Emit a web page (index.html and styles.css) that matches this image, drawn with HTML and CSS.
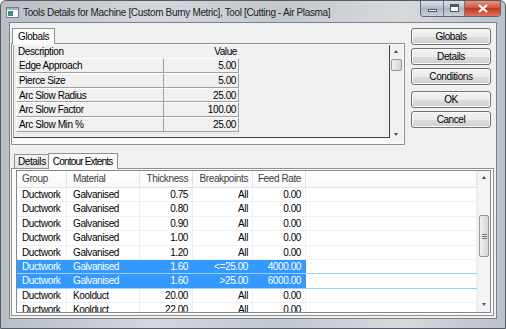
FILE: index.html
```html
<!DOCTYPE html>
<html lang="en">
<head>
  <meta charset="UTF-8">
  <title>Tools Details</title>
  <link rel="stylesheet" href="styles.css">
</head>
<body>
  <div class="window">
    <!-- caption bar -->
    <div class="titlebar">
      <svg class="app-icon" width="13" height="11" viewBox="0 0 13 11">
        <rect x="0.5" y="0.5" width="12" height="10" fill="#fff" stroke="#6d7f93"/>
        <rect x="1" y="1" width="11" height="2" fill="#9fb4cc"/>
        <rect x="2" y="4" width="3" height="5" fill="#3f9a5c"/>
        <rect x="5" y="4" width="2" height="5" fill="#3d7fc4"/>
      </svg>
      <span class="title">Tools Details for Machine [Custom Burny Metric], Tool [Cutting - Air Plasma]</span>
      <div class="caption-buttons">
        <div class="cap-btn cap-min"><span class="min-bar"></span></div>
        <div class="cap-btn cap-max"><span class="max-box"></span></div>
        <div class="cap-btn cap-close">
          <svg width="10" height="9" viewBox="0 0 10 9"><path d="M1 1 L9 8 M9 1 L1 8" stroke="#fff" stroke-width="2.2"/></svg>
        </div>
      </div>
    </div>

    <div class="client">
      <div class="top">
        <div class="tabs globals-tabs">
          <div class="tab-strip">
            <div class="tab active">Globals</div>
          </div>
          <div class="tab-panel globals-panel">
            <div class="grid">
              <div class="grid-rows">
                <div class="grid-head"><span class="g-desc">Description</span><span class="g-val">Value</span></div>
                <div class="grid-row"><span class="g-desc">Edge Approach</span><span class="g-val">5.00</span></div>
                <div class="grid-row"><span class="g-desc">Pierce Size</span><span class="g-val">5.00</span></div>
                <div class="grid-row"><span class="g-desc">Arc Slow Radius</span><span class="g-val">25.00</span></div>
                <div class="grid-row"><span class="g-desc">Arc Slow Factor</span><span class="g-val">100.00</span></div>
                <div class="grid-row"><span class="g-desc">Arc Slow Min %</span><span class="g-val">25.00</span></div>
              </div>
              <div class="vscroll small-scroll">
                <div class="arrow up"></div>
                <div class="thumb"></div>
                <div class="track"></div>
                <div class="arrow down"></div>
              </div>
            </div>
          </div>
        </div>

        <div class="buttons">
          <button class="btn">Globals</button>
          <button class="btn">Details</button>
          <button class="btn">Conditions</button>
          <button class="btn gap-before">OK</button>
          <button class="btn">Cancel</button>
        </div>
      </div>

      <div class="tabs bottom-tabs">
        <div class="tab-strip">
          <div class="tab">Details</div>
          <div class="tab active">Contour Extents</div>
        </div>
        <div class="tab-panel list-panel">
          <div class="listview">
            <div class="list-main">
              <div class="list-head">
                <span class="c-group">Group</span>
                <span class="c-mat">Material</span>
                <span class="c-thk num">Thickness</span>
                <span class="c-brk num">Breakpoints</span>
                <span class="c-feed num">Feed Rate</span>
                <span class="c-fill"></span>
              </div>
              <div class="list-row"><span class="c-group">Ductwork</span><span class="c-mat">Galvanised</span><span class="c-thk num">0.75</span><span class="c-brk num">All</span><span class="c-feed num">0.00</span><span class="c-fill"></span></div>
              <div class="list-row"><span class="c-group">Ductwork</span><span class="c-mat">Galvanised</span><span class="c-thk num">0.80</span><span class="c-brk num">All</span><span class="c-feed num">0.00</span><span class="c-fill"></span></div>
              <div class="list-row"><span class="c-group">Ductwork</span><span class="c-mat">Galvanised</span><span class="c-thk num">0.90</span><span class="c-brk num">All</span><span class="c-feed num">0.00</span><span class="c-fill"></span></div>
              <div class="list-row"><span class="c-group">Ductwork</span><span class="c-mat">Galvanised</span><span class="c-thk num">1.00</span><span class="c-brk num">All</span><span class="c-feed num">0.00</span><span class="c-fill"></span></div>
              <div class="list-row"><span class="c-group">Ductwork</span><span class="c-mat">Galvanised</span><span class="c-thk num">1.20</span><span class="c-brk num">All</span><span class="c-feed num">0.00</span><span class="c-fill"></span></div>
              <div class="list-row selected"><span class="c-group">Ductwork</span><span class="c-mat">Galvanised</span><span class="c-thk num">1.60</span><span class="c-brk num">&lt;=25.00</span><span class="c-feed num">4000.00</span><span class="c-fill"></span></div>
              <div class="list-row selected"><span class="c-group">Ductwork</span><span class="c-mat">Galvanised</span><span class="c-thk num">1.60</span><span class="c-brk num">&gt;25.00</span><span class="c-feed num">6000.00</span><span class="c-fill"></span></div>
              <div class="list-row"><span class="c-group">Ductwork</span><span class="c-mat">Koolduct</span><span class="c-thk num">20.00</span><span class="c-brk num">All</span><span class="c-feed num">0.00</span><span class="c-fill"></span></div>
              <div class="list-row"><span class="c-group">Ductwork</span><span class="c-mat">Koolduct</span><span class="c-thk num">22.00</span><span class="c-brk num">All</span><span class="c-feed num">0.00</span><span class="c-fill"></span></div>
            </div>
            <div class="vscroll list-scroll">
              <div class="arrow up"></div>
              <div class="track top-track"></div>
              <div class="thumb"><span class="grip"></span></div>
              <div class="track"></div>
              <div class="arrow down"></div>
            </div>
          </div>
        </div>
      </div>
    </div>
  </div>
</body>
</html>
```

FILE: styles.css
```css
* {
  box-sizing: border-box;
  margin: 0;
  padding: 0;
}

body {
  font-family: 'Liberation Sans', Arial, sans-serif;
  font-size: 10px;
  letter-spacing: -0.4px;
  color: #000;
  background: #fff;
}

/* window frame */
.window {
  width: 506px;
  height: 329px;
  padding: 0 8px 9px 8px;
  background: linear-gradient(90deg, #b9bec4 0%, #d4d8dc 30%, #c3c8cd 55%, #d7dadd 80%, #bcc1c6 100%);
  border: 1px solid #555b62;
  border-radius: 6px 6px 0 0;
  display: flex;
  flex-direction: column;
  overflow: hidden;
}

.titlebar {
  flex-shrink: 0;
  height: 21px;
  display: flex;
  align-items: flex-start;
  position: relative;
}

.app-icon {
  flex-shrink: 0;
  margin: 6px 0 0 -3px;
}

.title {
  font-size: 10px;
  letter-spacing: -0.35px;
  color: #1b1b1b;
  margin: 6px 0 0 4px;
  white-space: nowrap;
}

.caption-buttons {
  position: absolute;
  right: -4px;
  top: -1px;
  display: flex;
  border: 1px solid #5d6670;
  border-top: none;
  border-radius: 0 0 4px 4px;
  overflow: hidden;
}

.cap-btn {
  height: 16px;
  display: flex;
  align-items: center;
  justify-content: center;
  background: linear-gradient(#dfe4ea, #b7c0ca 50%, #a9b3be 51%, #c9d1d9);
}

.cap-min,
.cap-max {
  width: 23px;
  border-right: 1px solid #6f7882;
}

.cap-max {
  width: 21px;
}

.cap-close {
  width: 35px;
  background: linear-gradient(#e8a08f, #d0543c 50%, #c2341f 51%, #e07055);
}

.min-bar {
  width: 9px;
  height: 3px;
  margin-top: 5px;
  background: #fff;
  border: 1px solid #4c5560;
}

.max-box {
  width: 9px;
  height: 8px;
  border: 1px solid #4c5560;
  border-top-width: 3px;
  background: #fff;
}

.client {
  flex: 1;
  min-height: 0;
  background: #f0f0f0;
  border: 1px solid #7a8189;
  padding: 4px 0 0 1px;
  display: flex;
  flex-direction: column;
}

/* top section: globals grid + buttons */
.top {
  flex-shrink: 0;
  display: flex;
  height: 118px;
}

.tabs {
  display: flex;
  flex-direction: column;
}

.globals-tabs {
  width: 394px;
}

.tab-strip {
  flex-shrink: 0;
  display: flex;
  align-items: flex-end;
  height: 16px;
  padding-left: 2px;
  position: relative;
  z-index: 1;
}

.tab {
  height: 14px;
  padding: 0 3px;
  border: 1px solid #8c9196;
  border-bottom: none;
  background: linear-gradient(#f4f4f4, #e3e3e3);
  line-height: 13px;
  margin-right: -1px;
}

.tab.active {
  height: 16px;
  margin-bottom: -1px;
  background: #fbfbfb;
  line-height: 15px;
  padding: 0 5px;
  margin-left: -1px;
}

.tab-panel {
  border: 1px solid #8c9196;
  background: #f9f9f9;
}

.globals-panel {
  height: 102px;
  padding: 1px 1px 6px 1px;
}

.grid {
  display: flex;
  height: 100%;
}

.grid-rows {
  flex: 1;
  background: #f0f0f0;
  border-left: 1px solid #a0a0a0;
  border-right: 1px solid #404040;
  border-bottom: 1px solid #404040;
  padding-left: 2px;
}

.grid-head,
.grid-row {
  display: flex;
  height: 14.8px;
  line-height: 14px;
}

.grid-head {
  height: 13px;
  line-height: 13px;
}

.g-desc {
  width: 148px;
  padding-left: 2px;
}

.g-val {
  width: 75px;
  text-align: right;
  padding-right: 2px;
}

.grid-row .g-desc,
.grid-row .g-val {
  border-top: 1px solid #fff;
  border-left: 1px solid #fff;
  border-bottom: 1px solid #a0a0a0;
  border-right: 1px solid #a0a0a0;
}

.grid-row .g-val {
  border-left: none;
}

.grid-rows::after {
  content: '';
  display: block;
  margin-top: 1px;
  width: 226px;
  border-bottom: 1px solid #e3e3e3;
}

/* scroll bars */
.vscroll {
  flex-shrink: 0;
  width: 13px;
  display: flex;
  flex-direction: column;
  background: #f1f1f1;
}

.small-scroll {
  margin-bottom: -4px;
}

.arrow {
  flex-shrink: 0;
  height: 14px;
  position: relative;
}

.arrow::after {
  content: '';
  position: absolute;
  left: 4px;
  top: 5px;
  border-left: 2.5px solid transparent;
  border-right: 2.5px solid transparent;
}

.arrow.up::after {
  border-bottom: 3px solid #4d4d4d;
}

.arrow.down::after {
  border-top: 3px solid #4d4d4d;
}

.track {
  flex: 1;
}

.thumb {
  flex-shrink: 0;
  height: 12px;
  margin: 0 1px;
  border: 1px solid #979797;
  border-radius: 2px;
  background: linear-gradient(90deg, #f2f2f2, #e2e2e2 50%, #d6d6d6);
}

.top-track {
  flex: 0 0 30px;
}

.list-scroll .thumb {
  height: 42px;
  display: flex;
  align-items: center;
  justify-content: center;
}

.grip {
  width: 5px;
  height: 5px;
  border-top: 1px solid #777;
  border-bottom: 1px solid #777;
  position: relative;
}

.grip::after {
  content: '';
  position: absolute;
  left: 0;
  right: 0;
  top: 1px;
  border-top: 1px solid #777;
}

/* dialog buttons */
.buttons {
  display: flex;
  flex-direction: column;
  gap: 3px;
  margin: 1px 0 0 6px;
}

.btn {
  width: 80px;
  height: 17px;
  font-family: inherit;
  font-size: 10px;
  letter-spacing: -0.4px;
  color: #000;
  border: 1px solid #707070;
  border-radius: 3px;
  background: linear-gradient(#f2f2f2, #ebebeb 50%, #dddddd 51%, #cfcfcf);
  box-shadow: inset 0 0 0 1px #fbfbfb;
}

.btn.gap-before {
  margin-top: 3px;
}

/* bottom list */
.bottom-tabs {
  margin-top: 6px;
  flex: 1;
  min-height: 0;
  width: 483px;
  padding-bottom: 2px;
}

.bottom-tabs .tab-strip {
  height: 17px;
  padding-left: 3px;
}

.bottom-tabs .tab.active {
  padding: 0 4px;
  letter-spacing: -0.8px;
}

.list-panel {
  flex: 1;
  min-height: 0;
  padding: 1px 2px 2px 4px;
  background: #fbfbfb;
}

.listview {
  display: flex;
  height: 100%;
  background: #fff;
  border: 1px solid #828790;
  overflow: hidden;
}

.list-main {
  flex: 1;
  min-width: 0;
  overflow: hidden;
}

.list-head,
.list-row {
  display: flex;
  white-space: nowrap;
}

.list-head {
  height: 17px;
  line-height: 16px;
  color: #3e3e3e;
  background: linear-gradient(#ffffff, #f7f8f9);
  border-bottom: 1px solid #e3e4e6;
}

.list-head span {
  border-right: 1px solid #e2e3e6;
}

.list-row {
  flex-shrink: 0;
  height: 14.4px;
  line-height: 14px;
  border-bottom: 1px solid #f0f0f0;
}

.list-row span {
  border-right: 1px solid #f0f0f0;
}

.c-group {
  width: 50px;
  padding-left: 5px;
}

.c-mat {
  width: 73px;
  padding-left: 6px;
}

.c-thk {
  width: 53px;
}

.c-brk {
  width: 60px;
}

.c-feed {
  width: 53px;
}

.c-fill {
  flex: 1;
}

.num {
  text-align: right;
  padding-right: 4px;
}

.list-row.selected span:not(.c-fill) {
  background: #3399ff;
  color: #fff;
  border-right-color: #3399ff;
}

.list-row.selected {
  border-bottom-color: #9ecfff;
}

.list-scroll {
  background: #f4f4f4;
  border-left: 1px solid #ececec;
}
```
